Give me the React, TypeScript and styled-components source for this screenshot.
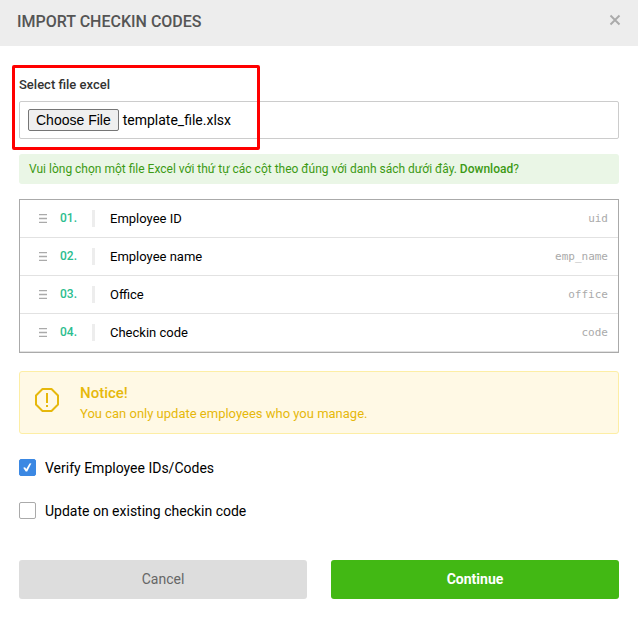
import { useEffect, useRef } from "react";
import styled, { createGlobalStyle } from "styled-components";

const GlobalStyle = createGlobalStyle`
  *, *::before, *::after { box-sizing: border-box; }
  body {
    margin: 0;
    background: #fff;
    color: #000;
    font: 14px/20px Roboto, "Liberation Sans", sans-serif;
  }
`;

const Header = styled.header`
  display: flex;
  align-items: center;
  justify-content: space-between;
  padding: 8px 17px 10px;
  background: #ededed;
`;

const Title = styled.h1`
  margin: 0;
  font-size: 16px;
  font-weight: 500;
  line-height: 28px;
  color: #555;
`;

const CloseButton = styled.button`
  display: flex;
  padding: 0 0 4px;
  border: 0;
  background: none;
  color: #aaa;
`;

const Form = styled.form`
  display: flex;
  flex-direction: column;
  padding: 29px 19px;
`;

const FileField = styled.div`
  position: relative;
  display: flex;
  flex-direction: column;
  gap: 6px;
`;

const FieldLabel = styled.label`
  font-size: 13px;
  font-weight: 500;
  color: #333;
`;

const FileInput = styled.input`
  width: 100%;
  height: 38px;
  padding: 7px 8px;
  border: 1px solid #ccc;
  border-radius: 2px;
  font: 14px/20px Roboto, sans-serif;
  color: #000;

  &::file-selector-button {
    height: 22px;
    margin: 0 4px 0 0;
    padding: 0 7px;
    border: 1px solid #767676;
    border-radius: 2px;
    background: #efefef;
    color: #000;
    font: 14px/20px "Liberation Sans", Arial, sans-serif;
  }
`;

const Highlight = styled.span`
  position: absolute;
  inset: -10px auto -11px -7px;
  width: 248px;
  border: 3px solid #f00;
  border-radius: 2px;
  pointer-events: none;
`;

const Hint = styled.p`
  margin: 15px 0;
  padding: 5px 10px;
  border-radius: 3px;
  background: #eaf6e6;
  color: #3c9a14;
  font-size: 12px;
`;

const DownloadLink = styled.a`
  color: inherit;
  font-weight: 500;
  text-decoration: none;
`;

const ColumnList = styled.ul`
  margin: 0;
  padding: 0;
  border: 1px solid #aaa;
  list-style: none;
`;

const ColumnRow = styled.li`
  display: flex;
  align-items: center;
  height: 38px;
  padding: 0 10px 0 19px;
  border-bottom: 1px solid #e2e2e2;
  font-size: 13px;
`;

const ColumnNumber = styled.span`
  width: 32px;
  margin-left: 13px;
  padding-bottom: 2px;
  color: #2bbd8e;
  font-size: 12px;
  font-weight: 500;
`;

const ColumnName = styled.span`
  flex: 1;
  border-left: 3px solid #ededed;
  padding-left: 15px;
  line-height: 17px;
`;

const ColumnKey = styled.code`
  color: #aaa;
  font: 11px/16px "DejaVu Sans Mono", monospace;
`;

const Notice = styled.section`
  display: flex;
  gap: 20px;
  margin: 18px 0 24px;
  padding: 10px 15px;
  border: 1px solid #fdeea5;
  border-radius: 3px;
  background: #fff9e5;
  color: #e6b80b;

  svg {
    margin-top: 6px;
  }
`;

const NoticeTitle = styled.h2`
  margin: 0;
  font-size: 15px;
  font-weight: 500;
  line-height: 22px;
`;

const NoticeText = styled.p`
  margin: 0;
  font-size: 13px;
  line-height: 19px;
`;

const Options = styled.div`
  display: flex;
  flex-direction: column;
  gap: 23px;
`;

const Option = styled.label`
  display: flex;
  align-items: center;
  gap: 9px;
`;

const CheckControl = styled.span`
  position: relative;
  display: flex;
  padding-bottom: 1px;

  svg {
    position: absolute;
    inset: 0;
    display: none;
    pointer-events: none;
  }

  input:checked + svg {
    display: block;
  }
`;

const Checkbox = styled.input`
  appearance: none;
  width: 17px;
  height: 17px;
  margin: 0;
  border: 1px solid #aaa;
  border-radius: 2px;
  background: #fff;

  &:checked {
    border-color: #3b88e3;
    background: #3b88e3;
  }
`;

const Actions = styled.div`
  display: grid;
  grid-template-columns: 1fr 1fr;
  gap: 24px;
  margin-top: 39px;
`;

const ActionButton = styled.button<{ $primary?: boolean }>`
  height: 39px;
  padding: 0 0 2px;
  border: 0;
  border-radius: 3px;
  background: ${({ $primary }) => ($primary ? "#42b814" : "#ddd")};
  color: ${({ $primary }) => ($primary ? "#fff" : "#666")};
  font: ${({ $primary }) => ($primary ? 700 : 400)} 14px/20px Roboto, sans-serif;
`;

const CloseIcon = () => (
  <svg width="12" height="12" viewBox="0 0 12 12" fill="none" stroke="currentColor" strokeWidth="1.9" aria-hidden="true">
    <path d="M1.5 1.5l9 9M10.5 1.5l-9 9" />
  </svg>
);

const HandleIcon = () => (
  <svg width="8" height="9" viewBox="0 0 8 9" fill="#aaa" aria-hidden="true">
    <path d="M0 0h8v1.3H0zM0 3.7h8v1.6H0zM0 7.7h8V9H0z" />
  </svg>
);

const WarningIcon = () => (
  <svg width="25" height="25" viewBox="0 0 25 25" fill="none" stroke="currentColor" strokeWidth="2" aria-hidden="true">
    <path d="M7.5 1h9L23 7.5v9L16.500 23h-9L1 16.500v-9z" strokeLinejoin="round" />
    <path d="M12 5v10M12 17v2" />
  </svg>
);

const CheckIcon = () => (
  <svg width="17" height="17" viewBox="0 0 17 17" fill="#fff" aria-hidden="true">
    <path d="M4.200 8.800l1.800-.6 1.300 1.700 3.200-5.300 1.900-.4-4.200 8.400H6.700z" />
  </svg>
);

const columns = [
  { name: "Employee ID", key: "uid" },
  { name: "Employee name", key: "emp_name" },
  { name: "Office", key: "office" },
  { name: "Checkin code", key: "code" },
];

const options = [
  { id: "verify", label: "Verify Employee IDs/Codes", checked: true },
  { id: "update", label: "Update on existing checkin code", checked: false },
];

export default function App() {
  const fileRef = useRef<HTMLInputElement>(null);

  useEffect(() => {
    const transfer = new DataTransfer();
    transfer.items.add(new File([""], "template_file.xlsx"));
    if (fileRef.current) fileRef.current.files = transfer.files;
  }, []);

  return (
    <main>
      <GlobalStyle />
      <Header>
        <Title>IMPORT CHECKIN CODES</Title>
        <CloseButton type="button" aria-label="Close">
          <CloseIcon />
        </CloseButton>
      </Header>
      <Form onSubmit={(event) => event.preventDefault()}>
        <FileField>
          <FieldLabel htmlFor="excel-file">Select file excel</FieldLabel>
          <FileInput ref={fileRef} id="excel-file" type="file" accept=".xlsx,.xls" />
          <Highlight />
        </FileField>
        <Hint>
          Vui lòng chọn một file Excel với thứ tự các cột theo đúng với danh sách dưới đây.{" "}
          <DownloadLink href="#download">Download</DownloadLink>?
        </Hint>
        <ColumnList>
          {columns.map((column, index) => (
            <ColumnRow key={column.key}>
              <HandleIcon />
              <ColumnNumber>{`0${index + 1}.`}</ColumnNumber>
              <ColumnName>{column.name}</ColumnName>
              <ColumnKey>{column.key}</ColumnKey>
            </ColumnRow>
          ))}
        </ColumnList>
        <Notice>
          <WarningIcon />
          <div>
            <NoticeTitle>Notice!</NoticeTitle>
            <NoticeText>You can only update employees who you manage.</NoticeText>
          </div>
        </Notice>
        <Options>
          {options.map((option) => (
            <Option key={option.id} htmlFor={option.id}>
              <CheckControl>
                <Checkbox id={option.id} type="checkbox" defaultChecked={option.checked} />
                <CheckIcon />
              </CheckControl>
              {option.label}
            </Option>
          ))}
        </Options>
        <Actions>
          <ActionButton type="button">Cancel</ActionButton>
          <ActionButton type="submit" $primary>
            Continue
          </ActionButton>
        </Actions>
      </Form>
    </main>
  );
}
